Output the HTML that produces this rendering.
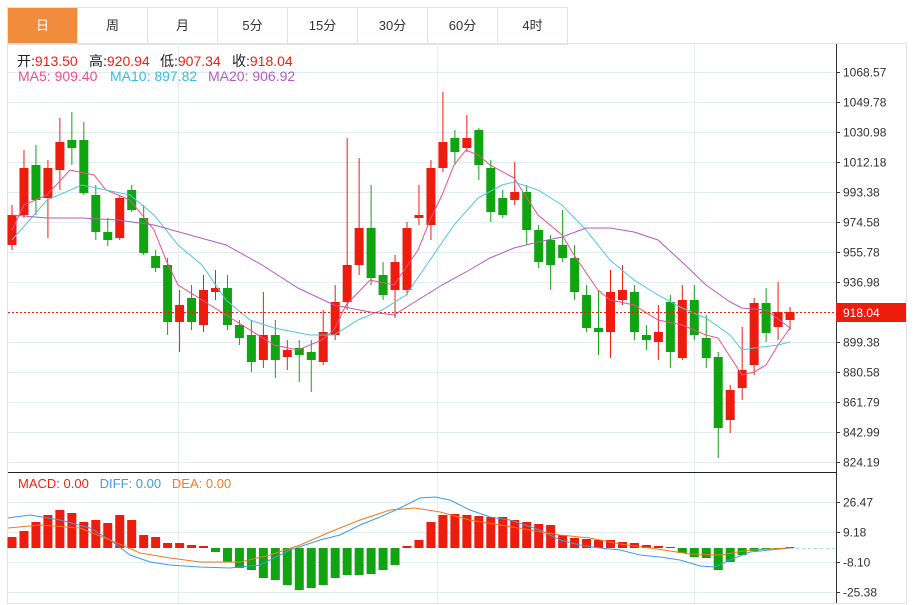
<!DOCTYPE html><html><head><meta charset="utf-8"><style>
body{margin:0;width:914px;height:605px;background:#fff;overflow:hidden;font-family:"Liberation Sans","Noto Sans CJK SC",sans-serif}
.tabs{position:absolute;left:7px;top:7px;height:36px;display:flex;border:1px solid #dfe4ea;border-right:none;}
.tabs div{width:69px;height:36px;line-height:36px;text-align:center;font-size:13px;color:#333;border-right:1px solid #dfe4ea}
.tabs .on{background:#f08c3c;color:#fff}
.l{position:absolute;font-size:14px;white-space:pre;color:#222}
.v{color:#ee2211}
</style></head><body>
<div class="tabs"><div class="on">日</div><div>周</div><div>月</div><div>5分</div><div>15分</div><div>30分</div><div>60分</div><div>4时</div></div>
<svg id="s" width="914" height="605" style="position:absolute;left:0;top:0;font-family:'Liberation Sans',sans-serif"></svg>
<div class="l" style="top:51px;left:17px">开:<span class="v">913.50</span></div>
<div class="l" style="top:51px;left:89px">高:<span class="v">920.94</span></div>
<div class="l" style="top:51px;left:160px">低:<span class="v">907.34</span></div>
<div class="l" style="top:51px;left:232px">收:<span class="v">918.04</span></div>
<div class="l" style="top:68px;left:18px;color:#ee4f8a">MA5: 909.40</div>
<div class="l" style="top:68px;left:110px;color:#35c0d6">MA10: 897.82</div>
<div class="l" style="top:68px;left:208px;color:#b35bc6">MA20: 906.92</div>
<div class="l" style="top:476px;left:18px;font-size:13px"><span style="color:#ee2211">MACD: 0.00</span>   <span style="color:#3c9ce8">DIFF: 0.00</span>   <span style="color:#f07a1a">DEA: 0.00</span></div>
<script>
var R='#ee1c0c',G='#11a411',o='';
o+='<rect x="7.5" y="43.5" width="899" height="560" fill="none" stroke="#dfe4ea"/>';
var pl=['1068.57','1049.78','1030.98','1012.18','993.38','974.58','955.78','936.98','918.04','899.38','880.58','861.79','842.99','824.19'];
for(var i=0;i<14;i++){var y=72+i*30;if(i!=8)o+='<line x1="8" x2="836" y1="'+(y+.5)+'" y2="'+(y+.5)+'" stroke="#e3ecf3"/>';
o+='<line x1="836" x2="840" y1="'+(y+.5)+'" y2="'+(y+.5)+'" stroke="#333"/>';
if(i!=8)o+='<text x="843" y="'+(y+4.5)+'" font-size="12" fill="#333">'+pl[i]+'</text>';}
var ml=['26.47','9.18','-8.10','-25.38'];
for(var i=0;i<4;i++){var y=502+i*30;o+='<line x1="8" x2="836" y1="'+(y+.5)+'" y2="'+(y+.5)+'" stroke="#e3ecf3"/><line x1="836" x2="840" y1="'+(y+.5)+'" y2="'+(y+.5)+'" stroke="#333"/><text x="843" y="'+(y+4.5)+'" font-size="12" fill="#333">'+ml[i]+'</text>';}
[178,437,694].forEach(function(x){o+='<line x1="'+(x+.5)+'" x2="'+(x+.5)+'" y1="44" y2="603" stroke="#e3ecf3"/>'});
o+='<line x1="836.5" x2="836.5" y1="44" y2="603" stroke="#333"/><line x1="8" x2="836" y1="472.5" y2="472.5" stroke="#222"/>';
var C=[['r',215,245,205,250],['r',168,215,150,218],['g',165,200,145,215],['r',168,198,160,238],['r',142,170,118,190],['g',140,148,112,165],['g',140,193,122,195],['g',195,232,185,240],['g',232,240,218,246],['r',198,238,195,240],['g',190,210,185,212],['g',218,253,205,255],['g',256,268,250,272],['g',265,322,258,335],['r',305,322,290,352],['g',298,322,285,330],['r',290,325,275,332],['r',288,292,270,300],['g',288,325,275,330],['g',325,338,320,345],['g',335,362,320,372],['r',335,360,292,368],['g',335,360,320,378],['r',350,357,340,370],['g',348,355,340,382],['g',352,360,340,392],['r',332,362,310,365],['r',302,335,285,340],['r',265,302,138,310],['r',228,265,158,275],['g',228,278,185,285],['g',275,295,262,300],['r',262,290,255,318],['r',228,290,222,295],['r',215,218,185,225],['r',168,225,160,240],['r',142,168,92,172],['g',138,152,130,165],['r',138,148,115,152],['g',130,165,128,180],['g',168,212,160,222],['g',198,215,190,218],['r',192,200,162,205],['g',192,230,185,245],['g',230,262,225,268],['g',240,265,235,290],['g',245,258,210,262],['g',258,292,245,300],['g',295,328,285,332],['g',328,332,290,355],['r',292,332,270,358],['r',290,300,265,305],['g',292,332,285,340],['g',335,340,325,350],['r',332,342,305,360],['g',302,352,295,368],['r',300,358,285,360],['g',300,335,285,340],['g',338,358,315,368],['g',357,428,352,458],['r',390,420,385,433],['r',370,388,327,400],['r',303,365,298,375],['g',303,333,288,342],['r',312,327,282,340],['r',312,320,307,330]];
C.forEach(function(c,i){var x=12+i*11.97,col=c[0]=='r'?R:G;o+='<line x1="'+x+'" x2="'+x+'" y1="'+c[3]+'" y2="'+c[4]+'" stroke="'+col+'"/><rect x="'+(x-4.5)+'" y="'+c[1]+'" width="9" height="'+Math.max(1,c[2]-c[1])+'" fill="'+col+'"/>';});
function P(a,col){o+='<polyline fill="none" stroke="'+col+'" stroke-width="1" points="'+a+'"/>'}
P('12,230 24,205 47,195 70,170 94,175 106,190 130,200 154,230 166,260 178,285 202,300 226,315 250,330 274,345 298,350 322,340 334,330 346,305 370,280 394,285 418,250 430,220 442,195 454,165 466,150 478,155 490,165 514,178 538,215 562,235 574,255 598,290 610,300 634,305 658,320 682,325 706,335 718,338 742,375 754,372 766,365 778,345 790,328','#ee4f8a');
P('12,240 47,200 82,185 106,190 130,195 154,215 178,245 202,265 226,300 250,320 274,328 310,335 334,335 358,320 382,310 406,295 430,260 454,225 478,198 502,185 514,182 538,190 562,205 586,230 610,260 634,280 658,295 682,308 706,318 730,335 742,350 754,348 778,345 790,342','#4dc8dc');
P('12,215 47,218 82,218 118,220 154,225 190,235 226,245 262,265 298,288 334,305 370,312 394,315 418,300 442,285 466,272 490,258 514,248 538,242 562,237 586,228 610,228 634,232 658,240 682,262 706,285 730,302 742,308 766,310 790,328','#b35bc6');
o+='<line x1="8" x2="836" y1="312.5" y2="312.5" stroke="#ee1c0c" stroke-dasharray="2,2"/><rect x="836" y="303" width="70" height="19" fill="#ee1c0c"/><text x="843" y="317" font-size="12" fill="#fff">918.04</text>';
var M=[537,531,522,515,510,513,522,520,523,515,520,535,537,543,543,545,546,552,562,568,570,578,580,585,590,588,585,578,575,575,574,570,565,546,540,522,515,514,515,516,517,517,520,522,524,525,535,538,539,540,540,542,543,545,546,547,553,557,558,570,562,555,551,549,549,548];
M.forEach(function(v,i){var x=12+i*11.97,z=548,col=v<z?R:G;if(Math.abs(v-z)<1)v=z-1;o+='<rect x="'+(x-4.5)+'" y="'+Math.min(v,z)+'" width="9" height="'+Math.abs(v-z)+'" fill="'+col+'"/>';});
P('8,518 30,515 60,520 90,528 110,540 130,555 150,562 170,565 200,567 230,568 260,565 290,550 320,540 340,535 360,525 380,517 400,508 420,498 435,497 450,500 470,510 490,517 510,520 540,530 560,540 580,545 600,548 620,550 640,555 660,557 680,560 700,566 715,567 730,560 750,552 790,548','#3c9ce8');
P('8,528 40,525 80,528 110,540 140,553 170,558 200,562 240,562 270,555 300,545 330,532 360,520 390,510 415,508 440,512 470,520 500,525 530,530 560,535 590,538 620,544 650,548 690,554 720,555 750,550 790,548','#f07a1a');
o+='<line x1="790" x2="836" y1="548.5" y2="548.5" stroke="#a8d8f0" stroke-dasharray="3,3"/>';
document.getElementById('s').innerHTML=o;
</script></body></html>
